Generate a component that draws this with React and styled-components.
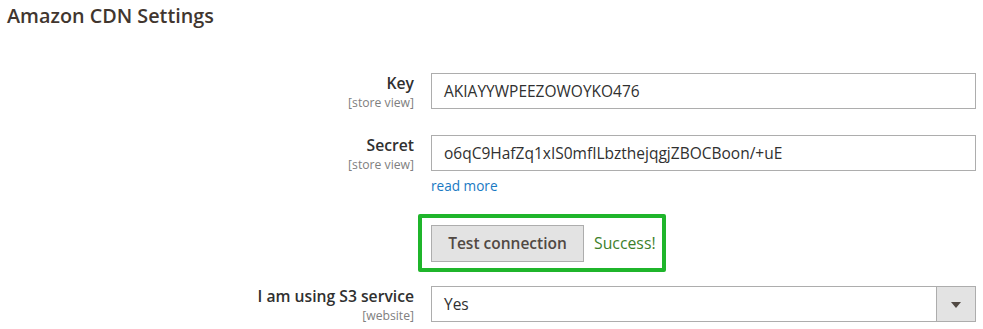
import React from "react";
import styled, { createGlobalStyle } from "styled-components";

const Global = createGlobalStyle`
  html, body { margin: 0; padding: 0; background: #fff; }
  body { font-family: "Open Sans", "Noto Sans", sans-serif; color: #303030; }
  * { box-sizing: border-box; }
`;

const Page = styled.div`
  width: 983px;
  height: 329px;
  overflow: hidden;
  padding: 4px 7px 0 7px;
`;

const Title = styled.h2`
  margin: 0;
  font-size: 19.8px;
  font-weight: 600;
  line-height: 24px;
  color: #41362f;
`;

const Form = styled.div`
  margin-top: 45px;
  display: flex;
  flex-direction: column;
`;

const Row = styled.div`
  display: grid;
  grid-template-columns: 407px 545px;
  column-gap: 17px;
  margin-top: ${(p) => p.$mt || 0}px;
`;

const LabelCell = styled.div`
  text-align: right;
`;

const LabelText = styled.div`
  font-size: 15.7px;
  font-weight: 600;
  line-height: 20px;
  color: #303030;
`;

const Scope = styled.div`
  margin-top: 2px;
  font-size: 12.2px;
  line-height: 15px;
  color: #808080;
`;

const Control = styled.div`
  display: flex;
  flex-direction: column;
`;

const Input = styled.div`
  height: 36px;
  border: 1px solid #adadad;
  padding: 0 12px;
  display: flex;
  align-items: center;
  font-size: 15.5px;
  color: #303030;
  background: #fff;
`;

const ReadMore = styled.a`
  margin-top: 6px;
  font-size: 13.6px;
  line-height: 18px;
  color: #1979c3;
  text-decoration: none;
  align-self: flex-start;
`;

const Highlight = styled.div`
  margin-left: -13px;
  width: 248px;
  height: 58px;
  border: 4px solid #1fb52b;
  border-radius: 2px;
  display: flex;
  align-items: center;
  padding-left: 9px;
  gap: 10px;
`;

const Button = styled.div`
  width: 153px;
  height: 37px;
  background: #e3e3e3;
  border: 1px solid #adadad;
  display: flex;
  align-items: center;
  justify-content: center;
  font-size: 15.5px;
  font-weight: 600;
  color: #514943;
`;

const Success = styled.span`
  font-size: 15.8px;
  color: #3d7f2b;
`;

const Select = styled.div`
  height: 36px;
  border: 1px solid #adadad;
  display: flex;
  font-size: 15.5px;
  color: #303030;
`;

const SelectValue = styled.div`
  flex: 1;
  display: flex;
  align-items: center;
  padding: 0 12px;
`;

const Arrow = styled.div`
  width: 39px;
  border-left: 1px solid #adadad;
  background: #e3e3e3;
  display: flex;
  align-items: center;
  justify-content: center;
  &::after {
    content: "";
    border-left: 5px solid transparent;
    border-right: 5px solid transparent;
    border-top: 6px solid #514943;
    margin-top: 1px;
  }
`;

export default function App() {
  return (
    <Page>
      <Global />
      <Title>Amazon CDN Settings</Title>
      <Form>
        <Row>
          <LabelCell>
            <LabelText>Key</LabelText>
            <Scope>[store view]</Scope>
          </LabelCell>
          <Control>
            <Input>AKIAYYWPEEZOWOYKO476</Input>
          </Control>
        </Row>
        <Row $mt={25}>
          <LabelCell>
            <LabelText>Secret</LabelText>
            <Scope>[store view]</Scope>
          </LabelCell>
          <Control>
            <Input>o6qC9HafZq1xIS0mfILbzthejqgjZBOCBoon/+uE</Input>
            <ReadMore href="#">read more</ReadMore>
          </Control>
        </Row>
        <Row $mt={19}>
          <LabelCell />
          <Control>
            <Highlight>
              <Button>Test connection</Button>
              <Success>Success!</Success>
            </Highlight>
          </Control>
        </Row>
        <Row $mt={14}>
          <LabelCell>
            <LabelText>I am using S3 service</LabelText>
            <Scope>[website]</Scope>
          </LabelCell>
          <Control>
            <Select>
              <SelectValue>Yes</SelectValue>
              <Arrow />
            </Select>
          </Control>
        </Row>
      </Form>
    </Page>
  );
}
